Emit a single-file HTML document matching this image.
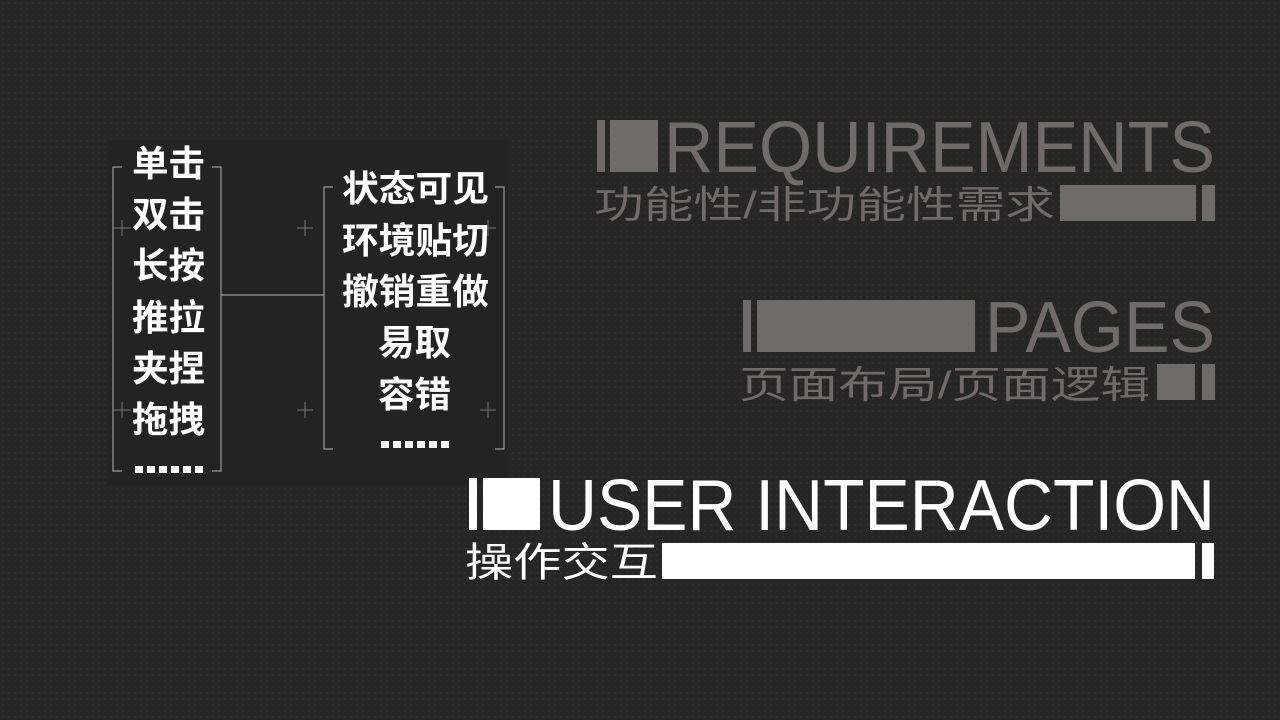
<!DOCTYPE html>
<html><head><meta charset="utf-8"><style>
html,body{margin:0;padding:0;}
body{width:1280px;height:720px;overflow:hidden;background:#262626;
background-image:radial-gradient(#2f2f2f 0.8px,transparent 1px);background-size:6px 6px;}
svg{position:absolute;left:0;top:0;}
</style></head><body>
<svg width="1280" height="720" xmlns="http://www.w3.org/2000/svg">
<rect x="108" y="140" width="400" height="345" fill="#232323"/>
<g stroke="#9a9a9a" stroke-width="1.2" fill="none">
<path d="M122 167 H113 V471 H122"/>
<path d="M212 167 H221 V471 H212"/>
<path d="M221 295 H324"/>
<path d="M333 187 H324 V449 H333"/>
<path d="M495 187 H504 V449 H495"/>
</g>
<g stroke="#777" stroke-width="1" fill="none">
<path d="M114 228 H131 M122 220 V236"/><path d="M297 228 H313 M305 220 V236"/><path d="M480 228 H496 M488 220 V236"/>
<path d="M114 410 H131 M122 402 V418"/><path d="M297 410 H313 M305 402 V418"/><path d="M480 410 H496 M488 402 V418"/>
</g>
<g fill="#fff" font-family="'Noto Sans CJK SC',sans-serif" font-weight="700" font-size="36">
<text x="132" y="176" textLength="73" lengthAdjust="spacingAndGlyphs">单击</text>
<text x="132" y="227" textLength="73" lengthAdjust="spacingAndGlyphs">双击</text>
<text x="132" y="278" textLength="73" lengthAdjust="spacingAndGlyphs">长按</text>
<text x="132" y="330" textLength="73" lengthAdjust="spacingAndGlyphs">推拉</text>
<text x="132" y="381" textLength="73" lengthAdjust="spacingAndGlyphs">夹捏</text>
<text x="132" y="432" textLength="73" lengthAdjust="spacingAndGlyphs">拖拽</text>
<text x="342" y="201" textLength="147" lengthAdjust="spacingAndGlyphs">状态可见</text>
<text x="342" y="253" textLength="147" lengthAdjust="spacingAndGlyphs">环境贴切</text>
<text x="342" y="304" textLength="147" lengthAdjust="spacingAndGlyphs">撤销重做</text>
<text x="378" y="355" textLength="73" lengthAdjust="spacingAndGlyphs">易取</text>
<text x="378" y="407" textLength="73" lengthAdjust="spacingAndGlyphs">容错</text>
</g>
<g fill="#fff">
<rect x="135" y="466" width="8" height="7"/><rect x="147" y="466" width="8" height="7"/><rect x="159" y="466" width="8" height="7"/><rect x="171" y="466" width="8" height="7"/><rect x="183" y="466" width="8" height="7"/><rect x="195" y="466" width="8" height="7"/>
<rect x="381" y="441" width="8" height="7"/><rect x="393" y="441" width="8" height="7"/><rect x="405" y="441" width="8" height="7"/><rect x="417" y="441" width="8" height="7"/><rect x="429" y="441" width="8" height="7"/><rect x="441" y="441" width="8" height="7"/>
</g>
<g fill="#6f6b6a">
<rect x="597" y="120" width="8" height="52"/><rect x="610" y="120" width="48" height="52"/>
<text x="664" y="172" font-family="'Liberation Sans',sans-serif" font-size="72" textLength="551" lengthAdjust="spacingAndGlyphs">REQUIREMENTS</text>
<text x="594" y="218" font-family="'Liberation Sans','Noto Sans CJK SC',sans-serif" font-size="38" textLength="461" lengthAdjust="spacingAndGlyphs">功能性/非功能性需求</text>
<rect x="1060" y="185" width="136" height="36"/><rect x="1202" y="185" width="13" height="36"/>
<rect x="743" y="300" width="8" height="52"/><rect x="757" y="300" width="218" height="52"/>
<text x="985" y="352" font-family="'Liberation Sans',sans-serif" font-size="72" textLength="230" lengthAdjust="spacingAndGlyphs">PAGES</text>
<text x="739" y="398" font-family="'Liberation Sans','Noto Sans CJK SC',sans-serif" font-size="38" textLength="411" lengthAdjust="spacingAndGlyphs">页面布局/页面逻辑</text>
<rect x="1157" y="364" width="38" height="36"/><rect x="1202" y="364" width="13" height="36"/>
</g>
<g fill="#fff">
<rect x="469" y="478" width="8" height="52"/><rect x="483" y="478" width="57" height="52"/>
<text x="548" y="530" font-family="'Liberation Sans',sans-serif" font-size="72" textLength="667" lengthAdjust="spacingAndGlyphs">USER INTERACTION</text>
<text x="465" y="576" font-family="'Liberation Sans','Noto Sans CJK SC',sans-serif" font-size="40" textLength="193" lengthAdjust="spacingAndGlyphs">操作交互</text>
<rect x="662" y="543" width="533" height="36"/><rect x="1202" y="543" width="12" height="36"/>
</g>
</svg>
</body></html>
